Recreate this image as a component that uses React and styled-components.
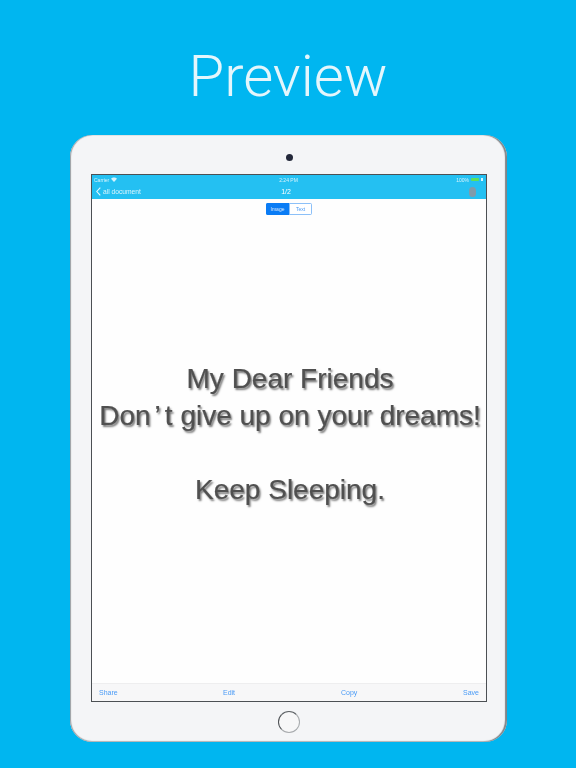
import React from 'react'
import styled, { createGlobalStyle } from 'styled-components'

const GlobalStyle = createGlobalStyle`
  html, body {
    margin: 0;
    padding: 0;
    background: #00b6f0;
  }
`

const Page = styled.div`
  width: 576px;
  height: 768px;
  overflow: hidden;
  display: flex;
  flex-direction: column;
  align-items: center;
  background: #00b6f0;
  font-family: "Liberation Sans", Arial, sans-serif;
`

const Title = styled.h1`
  margin: 0;
  height: 135px;
  padding-top: 37px;
  box-sizing: border-box;
  font-family: Roboto, sans-serif;
  font-weight: 300;
  font-size: 58px;
  line-height: 78px;
  color: #e4f6fc;
`

const Tablet = styled.div`
  width: 437px;
  height: 607px;
  box-sizing: border-box;
  margin-left: 1px;
  padding-left: 1px;
  display: flex;
  flex-direction: column;
  align-items: center;
  border-radius: 22px;
  background: #f4f5f7;
  filter: blur(0.25px);
  box-shadow: inset 1px 0 1px #9a9ea2, inset -2px 0 1px #808488, inset 0 -1px 1px #b9bcbe;
`

const Camera = styled.div`
  width: 7px;
  height: 7px;
  margin: 19px 0 13px;
  border-radius: 50%;
  background: #23283a;
`

const Screen = styled.div`
  width: 396px;
  height: 528px;
  box-sizing: border-box;
  display: flex;
  flex-direction: column;
  border: 1px solid #4c5054;
  background: #fff;
`

const TopBar = styled.div`
  background: #24c0f2;
  color: #fff;
`

const StatusBar = styled.div`
  height: 9px;
  padding: 0 3px 0 2px;
  display: grid;
  grid-template-columns: 1fr auto 1fr;
  align-items: center;
  font-size: 5px;
  color: #d6f3fc;
`

const StatusLeft = styled.div`
  display: flex;
  align-items: center;
  gap: 2px;
`

const StatusRight = styled.div`
  display: flex;
  justify-content: flex-end;
  align-items: center;
  gap: 2px;
`

const Battery = styled.span`
  width: 8px;
  height: 3px;
  border-radius: 1px;
  background: #5ee05a;
`

const Charge = styled.span`
  width: 2px;
  height: 3px;
  background: #d6f3fc;
`

const NavBar = styled.div`
  height: 15px;
  padding: 0 10px 0 4px;
  display: grid;
  grid-template-columns: 1fr auto 1fr;
  align-items: center;
  font-size: 7px;
`

const BackLink = styled.div`
  display: flex;
  align-items: center;
  gap: 2px;
  font-size: 6.7px;
  color: #d9f4fd;
`

const MicSlot = styled.div`
  display: flex;
  justify-content: flex-end;
`

const Mic = styled.span`
  width: 7px;
  height: 10px;
  border-radius: 3.5px;
  background: #7f9bab;
`

const Content = styled.div`
  flex: 1;
  display: flex;
  flex-direction: column;
  align-items: center;
  background: #fefefe;
`

const Segments = styled.div`
  margin-top: 4px;
  display: flex;
  border-radius: 2px;
  overflow: hidden;
`

const Segment = styled.span`
  width: 23px;
  height: 12px;
  box-sizing: border-box;
  display: flex;
  align-items: center;
  justify-content: center;
  font-size: 5px;
  color: ${p => (p.$active ? '#d8e9fd' : '#4a9bf6')};
  background: ${p => (p.$active ? '#0a7cf5' : '#fff')};
  border: 1px solid ${p => (p.$active ? '#0a7cf5' : '#8cc0f8')};
`

const Message = styled.div`
  margin: 145px 0 0 2px;
  font-size: 28px;
  line-height: 37px;
  text-align: center;
  white-space: nowrap;
  color: #505050;
  -webkit-text-stroke: 0.2px #505050;
  text-shadow: 1.5px 2px 2px #777;
`

const Apostrophe = styled.span`
  margin: 0 4px;
`

const Blank = styled.div`
  height: 37px;
`

const Toolbar = styled.div`
  height: 17px;
  padding-left: 7px;
  display: flex;
  align-items: center;
  font-size: 7px;
  color: #4a9bf6;
  background: #f7f7f8;
  border-top: 1px solid #eeeeef;
`

const ToolButton = styled.span`
  width: ${p => p.$width}px;
`

const HomeButton = styled.div`
  width: 20px;
  height: 20px;
  margin-top: 9px;
  border: 1px solid;
  border-color: #5c6064 #a8abae #a8abae #4c5054;
  border-radius: 50%;
  background: #f7f7f8;
`

export default function App() {
  return (
    <Page>
      <GlobalStyle />
      <Title>Preview</Title>
      <Tablet>
        <Camera />
        <Screen>
          <TopBar>
            <StatusBar>
              <StatusLeft>
                Carrier
                <svg width="6" height="5" viewBox="0 0 12 10">
                  <path d="M0 3.5 C3 0 9 0 12 3.5 L6 10 Z" fill="#d6f3fc" />
                </svg>
              </StatusLeft>
              <span>2:24 PM</span>
              <StatusRight>
                100%
                <Battery />
                <Charge />
              </StatusRight>
            </StatusBar>
            <NavBar>
              <BackLink>
                <svg width="5" height="9" viewBox="0 0 5 9">
                  <path d="M4.3 .6 L.8 4.5 L4.3 8.4" fill="none" stroke="#e6f8fe" strokeWidth="1.1" />
                </svg>
                all document
              </BackLink>
              <span>1/2</span>
              <MicSlot>
                <Mic />
              </MicSlot>
            </NavBar>
          </TopBar>
          <Content>
            <Segments>
              <Segment $active>Image</Segment>
              <Segment>Text</Segment>
            </Segments>
            <Message>
              <div>My Dear Friends</div>
              <div>Don<Apostrophe>’</Apostrophe>t give up on your dreams!</div>
              <Blank />
              <div>Keep Sleeping.</div>
            </Message>
          </Content>
          <Toolbar>
            <ToolButton $width={124}>Share</ToolButton>
            <ToolButton $width={118}>Edit</ToolButton>
            <ToolButton $width={122}>Copy</ToolButton>
            <ToolButton $width={16}>Save</ToolButton>
          </Toolbar>
        </Screen>
        <HomeButton />
      </Tablet>
    </Page>
  )
}
